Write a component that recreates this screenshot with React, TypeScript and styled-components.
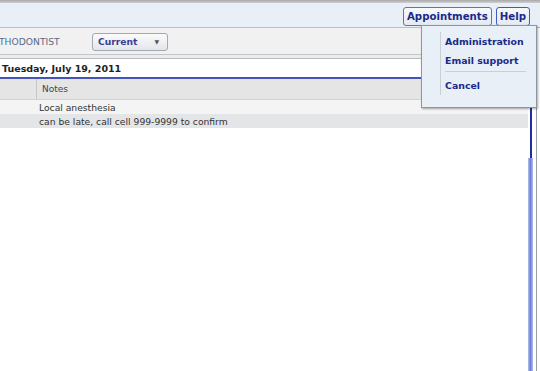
import React from 'react';
import styled, { createGlobalStyle } from 'styled-components';

const GlobalStyle = createGlobalStyle`
  html, body {
    margin: 0;
    padding: 0;
    background: #fff;
  }
  body {
    font-family: "DejaVu Sans", Verdana, sans-serif;
  }
`;

const Page = styled.div`
  position: relative;
  width: 540px;
  height: 371px;
  overflow: hidden;
  background: #fff;
  display: flex;
  flex-direction: column;
`;

const TopRule = styled.div`
  height: 3px;
  background: linear-gradient(#a9a9a9, #cfcfcf);
`;

const HeaderBar = styled.div`
  height: 24px;
  background: #e9eff6;
  border-bottom: 1px solid #b9bfc7;
  display: flex;
  align-items: center;
  justify-content: flex-end;
  gap: 4px;
  padding-right: 10px;
`;

const NavButton = styled.button<{ $active?: boolean }>`
  height: 19px;
  padding: 0 3px;
  margin-top: 2px;
  border: 1px solid ${(p) => (p.$active ? '#3c5cc4' : '#6d7582')};
  border-radius: 3px;
  background: linear-gradient(#f7f9fc, #e4eaf2);
  color: #1b2a8a;
  font-family: "DejaVu Sans", Verdana, sans-serif;
  font-weight: bold;
  font-size: 10.2px;
  line-height: 17px;
  cursor: pointer;
`;

const Body = styled.div`
  flex: 1;
  display: flex;
`;

const Main = styled.div`
  width: 528px;
  display: flex;
  flex-direction: column;
`;

const Toolbar = styled.div`
  height: 26px;
  background: #f1f1f1;
  border-bottom: 1px solid #c3c6ca;
  display: flex;
  align-items: center;
`;

const Specialty = styled.span`
  width: 93px;
  margin-left: -1px;
  color: #5a6a84;
  font-size: 9.2px;
`;

const Select = styled.div`
  width: 76px;
  height: 18px;
  margin-top: 1px;
  border: 1px solid #a3a9b3;
  border-radius: 3px;
  background: linear-gradient(#fbfbfc, #e3e6ea);
  display: flex;
  align-items: center;
  justify-content: space-between;
  padding: 0 8px 0 5px;
  box-sizing: border-box;
`;

const SelectText = styled.span`
  color: #393f92;
  font-weight: bold;
  font-size: 9.2px;
`;

const Caret = styled.span`
  color: #555;
  font-size: 6px;
`;

const Divider = styled.div`
  height: 3px;
  background: #ececec;
  border-bottom: 1px solid #b8bcc1;
`;

const DateRow = styled.div`
  height: 18px;
  background: #fff;
  border-bottom: 2px solid #4454b8;
  display: flex;
  align-items: center;
  padding-left: 2px;
  color: #1e1e1e;
  font-weight: bold;
  font-size: 9.5px;
`;

const GridHead = styled.div`
  height: 20px;
  background: #e5e5e5;
  border-bottom: 1px solid #d3d3d3;
  display: grid;
  grid-template-columns: 37px 1fr;
  font-size: 9px;
  color: #444;
`;

const HeadCell = styled.div<{ $first?: boolean }>`
  display: flex;
  align-items: center;
  padding-left: 5px;
  border-right: ${(p) => (p.$first ? '1px solid #c6c6c6' : 'none')};
`;

const Row = styled.div<{ $alt?: boolean }>`
  height: 14px;
  background: ${(p) => (p.$alt ? '#e4e5e7' : '#f4f4f4')};
  display: grid;
  grid-template-columns: 39px 1fr;
  align-items: center;
  font-size: 9.2px;
  color: #333;
`;

const Track = styled.div`
  flex: 1;
  display: flex;
`;

const Rail = styled.div`
  width: 6px;
  display: flex;
  flex-direction: column;
`;

const RailTop = styled.div`
  height: 51px;
`;

const RailLine = styled.div`
  height: 79px;
  width: 2px;
  margin-left: 2px;
  background: #1f2e9e;
`;

const Thumb = styled.div`
  flex: 1;
  width: 5px;
  background: linear-gradient(to right, #b5c0ec, #6d7fd6 50%, #b5c0ec);
`;

const GrayLine = styled.div`
  width: 1px;
  margin-left: 2px;
  background: #9c9fa3;
`;

const Menu = styled.div`
  position: absolute;
  top: 25px;
  left: 421px;
  width: 116px;
  height: 83px;
  background: #e9eff6;
  border: 1px solid #8d97a4;
  box-shadow: 1px 1px 2px rgba(0, 0, 0, 0.35);
  padding: 6px 0 0 18px;
  box-sizing: border-box;
`;

const MenuList = styled.div`
  height: 63px;
  border-left: 1px solid #c9cfd7;
  display: flex;
  flex-direction: column;
  padding-left: 4px;
`;

const MenuItem = styled.div`
  height: 19px;
  display: flex;
  align-items: center;
  color: #1b2a8a;
  font-weight: bold;
  font-size: 9.4px;
  cursor: pointer;
`;

const MenuSep = styled.div`
  height: 1px;
  margin: 2px 10px 4px 0;
  background: #c9cfd7;
`;

export default function App() {
  return (
    <Page>
      <GlobalStyle />
      <TopRule />
      <HeaderBar>
        <NavButton>Appointments</NavButton>
        <NavButton $active>Help</NavButton>
      </HeaderBar>
      <Body>
        <Main>
          <Toolbar>
            <Specialty>THODONTIST</Specialty>
            <Select>
              <SelectText>Current</SelectText>
              <Caret>▼</Caret>
            </Select>
          </Toolbar>
          <Divider />
          <DateRow>Tuesday, July 19, 2011</DateRow>
          <GridHead>
            <HeadCell $first />
            <HeadCell>Notes</HeadCell>
          </GridHead>
          <Row>
            <span />
            <span>Local anesthesia</span>
          </Row>
          <Row $alt>
            <span />
            <span>can be late, call cell 999-9999 to confirm</span>
          </Row>
        </Main>
        <Track>
          <Rail>
            <RailTop />
            <RailLine />
            <Thumb />
          </Rail>
          <GrayLine />
        </Track>
      </Body>
      <Menu>
        <MenuList>
          <MenuItem>Administration</MenuItem>
          <MenuItem>Email support</MenuItem>
          <MenuSep />
          <MenuItem>Cancel</MenuItem>
        </MenuList>
      </Menu>
    </Page>
  );
}
